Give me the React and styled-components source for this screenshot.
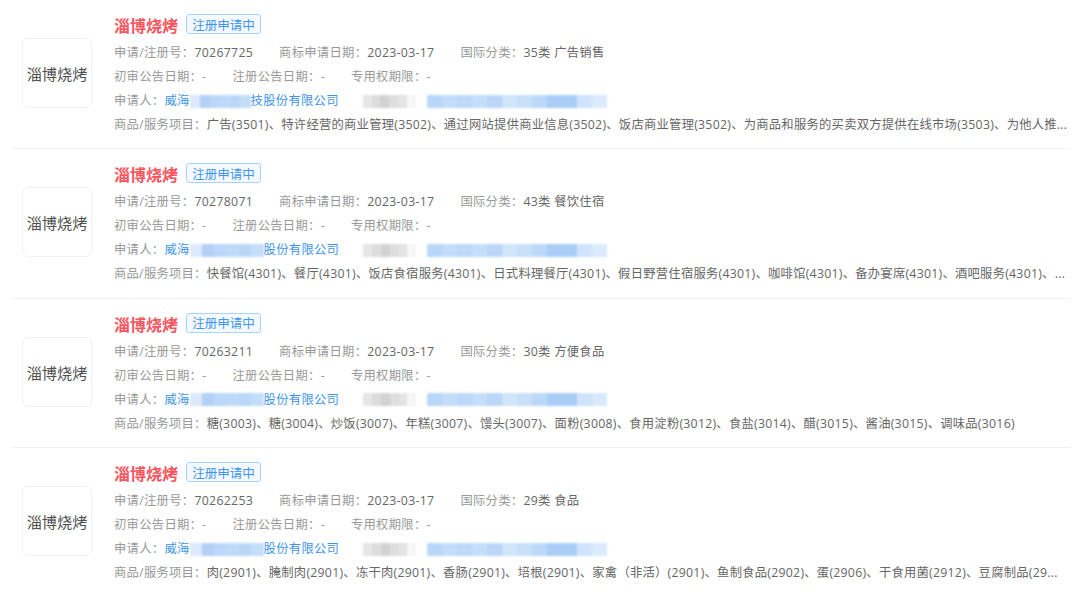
import React from 'react';
import styled, { createGlobalStyle } from 'styled-components';

const GlobalStyle = createGlobalStyle`
  html, body {
    margin: 0;
    padding: 0;
    background: #fff;
    font-family: "Open Sans", "Noto Sans CJK SC", sans-serif;
  }
`;

const records = [
  {
    regNo: '70267725',
    category: '35类 广告销售',
    nameBlur: 61,
    nameTail: '技股份有限公司',
    goods: '广告(3501)、特许经营的商业管理(3502)、通过网站提供商业信息(3502)、饭店商业管理(3502)、为商品和服务的买卖双方提供在线市场(3503)、为他人推...',
  },
  {
    regNo: '70278071',
    category: '43类 餐饮住宿',
    nameBlur: 74,
    nameTail: '股份有限公司',
    goods: '快餐馆(4301)、餐厅(4301)、饭店食宿服务(4301)、日式料理餐厅(4301)、假日野营住宿服务(4301)、咖啡馆(4301)、备办宴席(4301)、酒吧服务(4301)、...',
  },
  {
    regNo: '70263211',
    category: '30类 方便食品',
    nameBlur: 74,
    nameTail: '股份有限公司',
    goods: '糖(3003)、糖(3004)、炒饭(3007)、年糕(3007)、馒头(3007)、面粉(3008)、食用淀粉(3012)、食盐(3014)、醋(3015)、酱油(3015)、调味品(3016)',
  },
  {
    regNo: '70262253',
    category: '29类 食品',
    nameBlur: 74,
    nameTail: '股份有限公司',
    goods: '肉(2901)、腌制肉(2901)、冻干肉(2901)、香肠(2901)、培根(2901)、家禽（非活）(2901)、鱼制食品(2902)、蛋(2906)、干食用菌(2912)、豆腐制品(29...',
  },
];

const greyCells = ['#e6e6e6', '#dcdcdc', '#d2d2d2', '#dedede', '#e4e4e4', '#f6f6f6'];
const blueCells = ['#b9d7f8', '#c2dcf9', '#bdd8f8', '#c6def9', '#bad7f8', '#d0e4fa', '#c8dff9', '#bcd8f8', '#a9cdf6', '#a9cdf6', '#cfe3fb', '#dbe9fc'];
const nameCells = ['#dce9fb', '#b4d0f6', '#bcd7f8', '#bedaf9', '#bad7f8', '#c4ddf9'];

const Blur = ({ cells, width }) => (
  <BlurStrip style={{ width }}>
    {cells.map((color, i) => <BlurCell key={i} color={color} />)}
  </BlurStrip>
);

const TrademarkRow = ({ record }) => (
  <Row>
    <Logo>淄博烧烤</Logo>
    <Content>
      <TitleLine>
        <Title>淄博烧烤</Title>
        <Status>注册申请中</Status>
      </TitleLine>
      <MetaLine>
        <Field><Label>申请/注册号：</Label>{record.regNo}</Field>
        <Field><Label>商标申请日期：</Label>2023-03-17</Field>
        <Field><Label>国际分类：</Label>{record.category}</Field>
      </MetaLine>
      <MetaLine>
        <Field><Label>初审公告日期：</Label><Label>-</Label></Field>
        <Field><Label>注册公告日期：</Label><Label>-</Label></Field>
        <Field><Label>专用权期限：</Label><Label>-</Label></Field>
      </MetaLine>
      <ApplicantLine>
        <Label>申请人：</Label>
        <Applicant>
          威海
          <Blur cells={nameCells} width={record.nameBlur} />
          {record.nameTail}
        </Applicant>
        <Redacted>
          <Blur cells={greyCells} width={53} />
          <Blur cells={blueCells} width={180} />
        </Redacted>
      </ApplicantLine>
      <GoodsLine>
        <Label>商品/服务项目：</Label>{record.goods}
      </GoodsLine>
    </Content>
  </Row>
);

export default function App() {
  return (
    <Page>
      <GlobalStyle />
      {records.map(record => <TrademarkRow key={record.regNo} record={record} />)}
    </Page>
  );
}

const Page = styled.div`
  width: 1080px;
  height: 596px;
  overflow: hidden;
  box-sizing: border-box;
  padding: 0 10px 0 12px;
  background: #fff;
`;

const Row = styled.div`
  display: flex;
  align-items: flex-start;
  box-sizing: border-box;
  height: 149.4px;
  padding-top: 13px;
  border-bottom: 1px solid #f0f0f0;

  &:last-child {
    border-bottom: none;
  }
`;

const Logo = styled.div`
  flex: none;
  width: 70px;
  height: 70px;
  margin: 25px 22px 0 10px;
  display: flex;
  align-items: center;
  justify-content: center;
  box-sizing: border-box;
  border: 1px solid #f1f1f1;
  border-radius: 6px;
  font-size: 15.2px;
  color: #505050;
`;

const Content = styled.div`
  flex: 1;
  min-width: 0;
  font-size: 12.3px;
  letter-spacing: 0.3px;
  color: #666;
`;

const TitleLine = styled.div`
  display: flex;
  align-items: center;
  gap: 8px;
  height: 24px;
  margin-bottom: 4px;
  letter-spacing: 0;
`;

const Title = styled.span`
  font-size: 16px;
  font-weight: 700;
  color: #f9545e;
`;

const Status = styled.span`
  box-sizing: border-box;
  height: 20px;
  width: 75px;
  margin-bottom: 2px;
  display: flex;
  align-items: center;
  justify-content: center;
  font-size: 12.5px;
  color: #3f96f0;
  background: #f3f9ff;
  border: 1px solid #a9d3fa;
  border-radius: 3px;
`;

const MetaLine = styled.div`
  display: flex;
  gap: 26px;
  height: 24px;
  line-height: 24px;
  white-space: nowrap;
`;

const Field = styled.span``;

const Label = styled.span`
  color: #999;
`;

const ApplicantLine = styled.div`
  display: flex;
  height: 24px;
  line-height: 24px;
  white-space: nowrap;
`;

const Applicant = styled.span`
  display: inline-flex;
  align-items: center;
  color: #3e93ee;
`;

const Redacted = styled.span`
  display: inline-flex;
  align-items: center;
  gap: 11px;
  margin-left: 24px;
`;

const BlurStrip = styled.span`
  display: inline-flex;
  height: 13px;
  filter: blur(1.2px);
`;

const BlurCell = styled.span`
  flex: 1;
  background: ${props => props.color};
`;

const GoodsLine = styled.div`
  height: 24px;
  line-height: 24px;
  letter-spacing: 0.26px;
  white-space: nowrap;
`;
